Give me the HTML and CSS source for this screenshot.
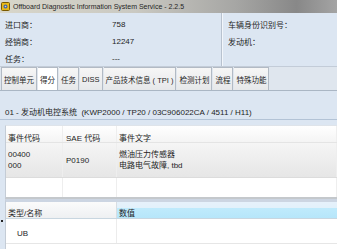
FILE: index.html
```html
<!DOCTYPE html>
<html lang="zh">
   <head>
      <meta charset="UTF-8" />
      <title>Offboard Diagnostic Information System Service</title>
      <link rel="stylesheet" href="styles.css">
   </head>
   <body>
      <div class="titlebar">
         <svg class="app-icon" width="9" height="9" viewBox="0 0 9 9">
            <rect x="0.5" y="0.5" width="8" height="8" rx="1" fill="#e8b818" stroke="#7a5a00" stroke-width="1" />
            <circle cx="4.5" cy="4.5" r="2" fill="#3a62b8" />
            <circle cx="4.5" cy="4.5" r="0.8" fill="#f4e08a" />
         </svg>
         <span>Offboard Diagnostic Information System Service - 2.2.5</span>
      </div>

      <div class="info">
         <div class="info-left">
            <div class="info-row"><span class="label">进口商：</span><span>758</span></div>
            <div class="info-row"><span class="label">经销商：</span><span>12247</span></div>
            <div class="info-row"><span class="label">任务：</span><span>---</span></div>
         </div>
         <div class="info-right">
            <div class="info-row">车辆身份识别号：</div>
            <div class="info-row">发动机：</div>
         </div>
      </div>

      <nav class="tabs">
         <a class="tab">控制单元</a>
         <a class="tab active">得分</a>
         <a class="tab">任务</a>
         <a class="tab">DISS</a>
         <a class="tab">产品技术信息 ( TPI )</a>
         <a class="tab">检测计划</a>
         <a class="tab">流程</a>
         <a class="tab">特殊功能</a>
      </nav>

      <div class="ecu">01 - 发动机电控系统&nbsp; (KWP2000 / TP20 / 03C906022CA / 4511 / H11)</div>

      <div class="events">
         <div class="ev-row ev-head">
            <div class="c1">事件代码</div>
            <div class="c2">SAE 代码</div>
            <div class="c3">事件文字</div>
         </div>
         <div class="ev-row ev-data">
            <div class="c1">00400<br>000</div>
            <div class="c2">P0190</div>
            <div class="c3">燃油压力传感器<br>电路电气故障, tbd</div>
         </div>
         <div class="ev-row ev-empty">
            <div class="c1"></div>
            <div class="c2"></div>
            <div class="c3"></div>
         </div>
      </div>

      <div class="values">
         <span class="grip"></span>
         <div class="val-row val-head">
            <div class="v1">类型/名称</div>
            <div class="v2 sorted">数值</div>
         </div>
         <div class="val-row val-data">
            <div class="v1 indent">UB</div>
            <div class="v2"></div>
         </div>
      </div>
   </body>
</html>
```

FILE: styles.css
```css
* {
   box-sizing: border-box;
}

body {
   margin: 0;
   width: 337px;
   height: 249px;
   overflow: hidden;
   background-color: #dce6f2;
   font-family: 'Liberation Sans', 'Noto Sans CJK SC', sans-serif;
   font-size: 8px;
   color: #1e1e1e;
}

.titlebar {
   display: flex;
   align-items: center;
   gap: 3px;
   height: 13px;
   padding-left: 1px;
   background: linear-gradient(to right, #d8d6ca 0%, #cac9c2 40%, #a6a6a4 70%, #888888 88%, #a4a4a4 100%);
   font-size: 7px;
   color: #262626;
}

.app-icon {
   flex: none;
}

.info {
   display: flex;
   height: 54px;
   border-bottom: 1px solid #c3ccd8;
}

.info-left {
   width: 222px;
   padding: 3px 0 0 5px;
   border-right: 1px solid #b8c2cf;
   box-shadow: 1px 0 0 #f2f6fb;
}

.info-right {
   flex: 1;
   padding: 3px 0 0 6px;
}

.info-row {
   display: flex;
   height: 17px;
   align-items: center;
}

.label {
   width: 107px;
}

.tabs {
   display: flex;
   gap: 1px;
   height: 24px;
   padding-left: 1px;
   border-bottom: 1px solid #aab6c4;
   background-color: #dfe6ee;
   font-size: 7.5px;
}

.tab {
   display: flex;
   align-items: center;
   padding: 0 2px;
   border-top: 1px solid #b2bac4;
   border-right: 1px solid #b2bac4;
   background: linear-gradient(#f6f6f6, #e6e8ea);
   white-space: pre;
}

.tab:first-child {
   border-left: 1px solid #b2bac4;
}

.tab.active {
   background: #ffffff;
}

.ecu {
   height: 29px;
   padding: 15px 0 0 5px;
   border-bottom: 1px solid #b3c3d6;
}

.events {
   margin: 5px 0 0 5px;
   height: 74px;
   border-left: 1px solid #c4ccd6;
   border-top: 1px solid #dfe4ea;
   border-bottom: 2px solid #c4c8cc;
   background-color: #ffffff;
}

.ev-row {
   display: flex;
}

.ev-row > div {
   border-right: 1px solid #eeeeee;
   padding-left: 2px;
}

.c1 {
   width: 57px;
}

.c2 {
   width: 54px;
   padding-left: 3px !important;
}

.c3 {
   flex: 1;
}

.ev-head {
   height: 17px;
   background: linear-gradient(#ffffff, #f4f4f4);
   border-bottom: 1px solid #e4e4e4;
}

.ev-head > div {
   display: flex;
   align-items: center;
   padding-top: 6px;
}

.ev-data {
   height: 35px;
   background: linear-gradient(#f5f5f5, #e6e6e6);
   border-bottom: 1px solid #dcdcdc;
}

.ev-data > div {
   display: flex;
   align-items: center;
   line-height: 11px;
}

.ev-empty {
   height: 19px;
}

.values {
   position: relative;
   height: 50px;
   margin-left: 5px;
   border-left: 1px solid #c4ccd6;
   border-top: 3px solid #ccd5e2;
   background-color: #ffffff;
}

.grip {
   position: absolute;
   left: -5px;
   top: 18px;
   width: 2px;
   height: 2px;
   background-color: #222222;
}

.val-row {
   display: flex;
   height: 25px;
   border-bottom: 1px solid #e6e6e6;
}

.val-head {
   height: 17px;
   border-bottom: 1px solid #c8d6e0;
}

.val-row > div {
   display: flex;
   align-items: center;
   padding-left: 2px;
}

.val-head > div {
   padding-top: 5px;
}

.val-data > div {
   padding-top: 4px;
}

.v1 {
   width: 111px;
   border-right: 1px solid #ececec;
}

.v2 {
   flex: 1;
}

.val-head .v1 {
   background: linear-gradient(#fbfbfb, #eef0f2);
   border-right: 1px solid #d8dde2;
}

.sorted {
   background: linear-gradient(#e6f1fb 0%, #e2f1fb 38%, #bfeafc 40%, #b6e6fa 100%);
}

.indent {
   padding-left: 11px !important;
}
```
